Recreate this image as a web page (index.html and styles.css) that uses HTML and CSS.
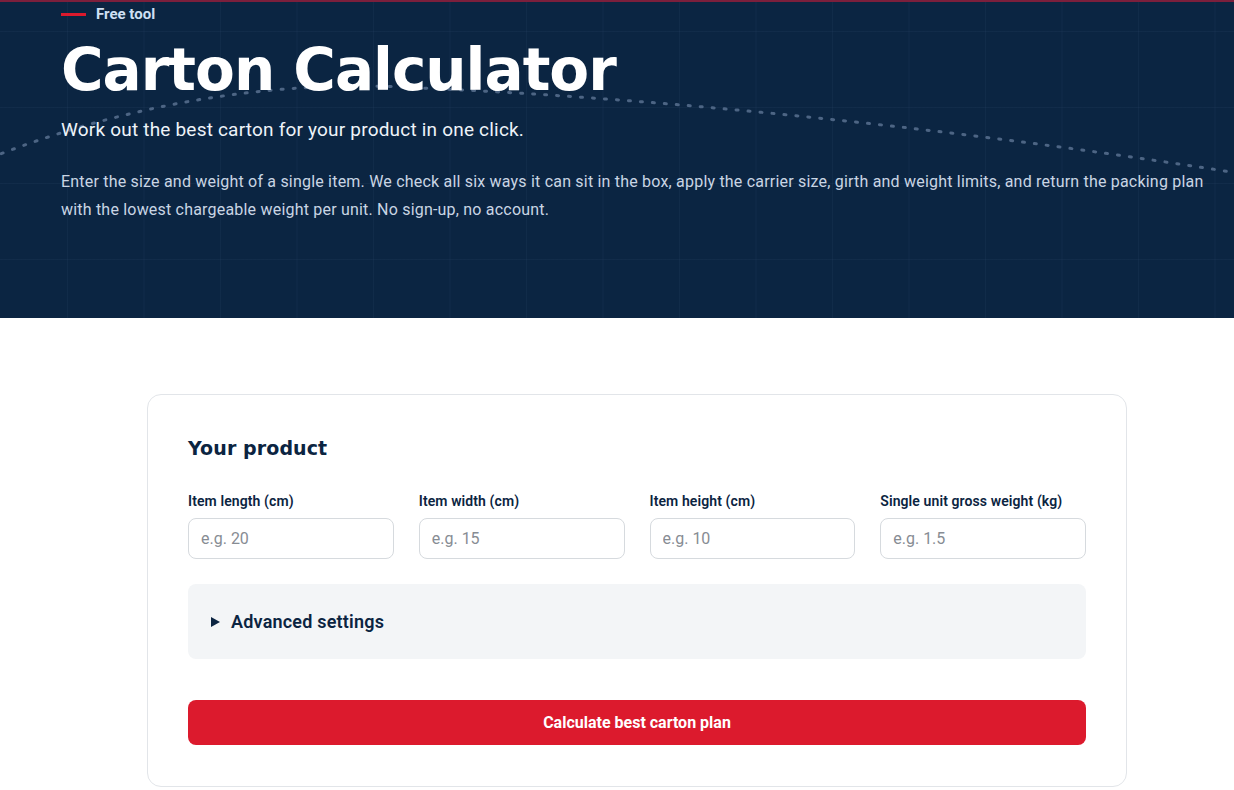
FILE: index.html
```html
<!DOCTYPE html>
<html lang="en">
<head>
<meta charset="utf-8">
<title>Carton Calculator</title>
<link rel="stylesheet" href="styles.css">
</head>
<body>
<header class="hero">
  <svg class="hero-curve" viewBox="0 0 1234 318" preserveAspectRatio="none" aria-hidden="true">
    <path d="M-10,158 C150,95 300,80 420,88 C700,100 1000,135 1250,175" fill="none" stroke="#4d6584" stroke-width="3" stroke-linecap="round" stroke-dasharray="2 10"/>
  </svg>
  <div class="hero-inner">
    <div class="eyebrow"><span class="eyebrow-line"></span>Free tool</div>
    <h1 class="hero-title">Carton Calculator</h1>
    <p class="hero-sub">Work out the best carton for your product in one click.</p>
    <p class="hero-desc">Enter the size and weight of a single item. We check all six ways it can sit in the box, apply the carrier size, girth and weight limits, and return the packing plan with the lowest chargeable weight per unit. No sign-up, no account.</p>
  </div>
</header>
<main class="main">
  <section class="card">
    <h2 class="card-title">Your product</h2>
    <div class="fields">
      <label class="field"><span class="field-label">Item length (cm)</span><input class="field-input" type="text" placeholder="e.g. 20"></label>
      <label class="field"><span class="field-label">Item width (cm)</span><input class="field-input" type="text" placeholder="e.g. 15"></label>
      <label class="field"><span class="field-label">Item height (cm)</span><input class="field-input" type="text" placeholder="e.g. 10"></label>
      <label class="field"><span class="field-label">Single unit gross weight (kg)</span><input class="field-input" type="text" placeholder="e.g. 1.5"></label>
    </div>
    <details class="advanced">
      <summary class="advanced-summary">Advanced settings</summary>
    </details>
    <button class="submit" type="button">Calculate best carton plan</button>
  </section>
</main>
</body>
</html>
```

FILE: styles.css
```css
* { box-sizing: border-box; }
html, body { margin: 0; padding: 0; }
body {
  font-family: Roboto, "Liberation Sans", sans-serif;
  background: #ffffff;
  color: #0b2441;
}
.hero {
  position: relative;
  height: 318px;
  background-color: #0b2542;
  background-image:
    linear-gradient(to right, rgba(120,150,190,0.06) 1px, transparent 1px),
    linear-gradient(to bottom, rgba(120,150,190,0.06) 1px, transparent 1px);
  background-size: 76.5px 76px;
  background-position: 67px 29px;
  border-top: 2px solid #7c1f3c;
  overflow: hidden;
}
.hero-curve {
  position: absolute;
  left: 0; top: -2px;
  width: 100%; height: 318px;
}
.hero-inner {
  position: relative;
  padding: 4px 25px 0 61px;
  width: 1234px;
}
.eyebrow {
  display: flex;
  align-items: center;
  gap: 10px;
  font-size: 15px;
  font-weight: 700;
  color: #cfe0f4;
  height: 16px;
}
.eyebrow-line {
  display: inline-block;
  width: 25px;
  height: 3px;
  background: #dc1a2d;
}
.hero-title {
  margin: 16px 0 0;
  font-family: "DejaVu Sans", sans-serif;
  font-size: 58px;
  line-height: 64px;
  font-weight: 700;
  letter-spacing: -1px;
  color: #ffffff;
}
.hero-sub {
  margin: 15px 0 0;
  font-size: 19px;
  line-height: 26px;
  letter-spacing: 0.2px;
  color: #eef3f9;
}
.hero-desc {
  margin: 25px 0 0;
  font-size: 16px;
  line-height: 28px;
  letter-spacing: 0.2px;
  color: #c9d5e4;
}
.main {
  padding: 76px 0 40px 147px;
  display: flex;
}
.card {
  width: 980px;
  border: 1px solid #e2e5e9;
  border-radius: 14px;
  padding: 38px 40px 41px;
  background: #fff;
}
.card-title {
  margin: 0;
  font-family: "DejaVu Sans", sans-serif;
  font-size: 19px;
  line-height: 30px;
  font-weight: 700;
  letter-spacing: 0.1px;
  color: #0b2441;
}
.fields {
  margin-top: 30px;
  display: grid;
  grid-template-columns: repeat(4, minmax(0, 1fr));
  gap: 25px;
}
.field { display: flex; flex-direction: column; gap: 9px; min-width: 0; }
.field-label {
  font-size: 14px;
  line-height: 16px;
  font-weight: 600;
  letter-spacing: 0.1px;
  color: #0b2441;
}
.field-input {
  width: 100%;
  min-width: 0;
  height: 41px;
  border: 1px solid #d6dade;
  border-radius: 8px;
  padding: 0 12px;
  font-family: Roboto, "Liberation Sans", sans-serif;
  font-size: 16px;
  color: #0b2441;
  background: #fff;
}
.field-input::placeholder { color: #878c93; }
.advanced {
  margin-top: 25px;
  background: #f3f5f7;
  border-radius: 8px;
}
.advanced-summary {
  height: 75px;
  display: flex;
  align-items: center;
  padding-left: 23px;
  font-size: 18px;
  font-weight: 600;
  letter-spacing: 0.2px;
  color: #0b2441;
  list-style: none;
  cursor: pointer;
}
.advanced-summary::-webkit-details-marker { display: none; }
.advanced-summary::before {
  content: "";
  width: 0; height: 0;
  border-left: 9px solid #0b2441;
  border-top: 5px solid transparent;
  border-bottom: 5px solid transparent;
  margin-right: 11px;
}
.submit {
  margin-top: 41px;
  width: 100%;
  height: 45px;
  border: 0;
  border-radius: 8px;
  background: #dc1a2d;
  color: #fff;
  font-family: Roboto, "Liberation Sans", sans-serif;
  font-size: 16px;
  font-weight: 700;
  cursor: pointer;
}
```
